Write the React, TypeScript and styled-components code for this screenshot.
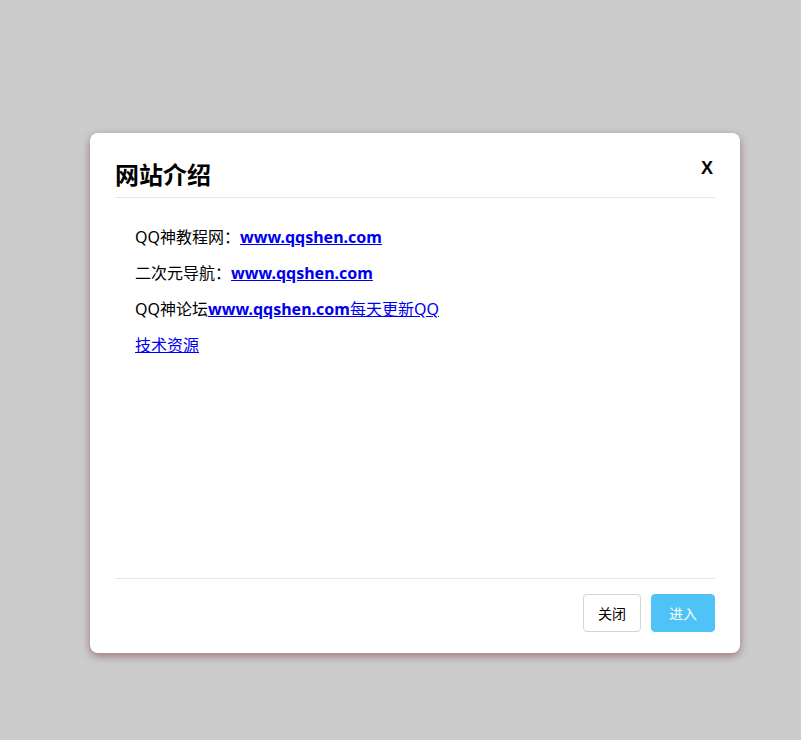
import styled, { createGlobalStyle } from "styled-components";

const GlobalStyle = createGlobalStyle`
  html, body {
    margin: 0;
    padding: 0;
    background: #cccccc;
    font-family: "Noto Sans", "Noto Sans CJK SC", sans-serif;
  }
`;

const Page = styled.div`
  min-height: 740px;
  padding: 133px 0 0 90px;
  box-sizing: border-box;
`;

const Dialog = styled.div`
  width: 650px;
  height: 520px;
  background: #fff;
  border-radius: 8px;
  box-shadow: 0 3px 9px rgba(120, 50, 50, 0.55);
  display: flex;
  flex-direction: column;
  padding: 0 25px;
  box-sizing: border-box;
`;

const Header = styled.div`
  display: flex;
  justify-content: space-between;
  align-items: flex-start;
  height: 65px;
  padding-top: 23px;
  box-sizing: border-box;
  border-bottom: 1px solid #e5e5e5;
`;

const Title = styled.h2`
  margin: 7px 0 0;
  font-size: 24px;
  line-height: 24px;
  font-weight: bold;
  color: #000;
`;

const Close = styled.button`
  border: 0;
  background: none;
  padding: 0;
  margin: 3px 2px 0 0;
  font-family: "Liberation Sans", sans-serif;
  font-size: 18px;
  line-height: 18px;
  font-weight: bold;
  color: #000;
  cursor: pointer;
`;

const Body = styled.div`
  flex: 1;
  padding: 21px 20px 0;
`;

const Line = styled.p`
  margin: 0;
  font-size: 16px;
  line-height: 36px;
  color: #000;
`;

const Link = styled.a<{ $bold?: boolean }>`
  color: #0000ee;
  text-decoration: underline;
  font-weight: ${(p) => (p.$bold ? "bold" : "normal")};
`;

const Footer = styled.div`
  display: flex;
  justify-content: flex-end;
  gap: 10px;
  padding: 15px 0 21px;
  border-top: 1px solid #e5e5e5;
`;

const Button = styled.button<{ $primary?: boolean }>`
  height: 38px;
  padding: 0 ${(p) => (p.$primary ? "17px" : "14px")};
  border-radius: 4px;
  font-family: "Noto Sans CJK SC", sans-serif;
  font-size: 14px;
  border: 1px solid ${(p) => (p.$primary ? "#4fc3f7" : "#d5d5d5")};
  background: ${(p) => (p.$primary ? "#4fc3f7" : "#fff")};
  color: ${(p) => (p.$primary ? "#fff" : "#000")};
  cursor: pointer;
`;

const App = () => {
  return (
    <Page>
      <GlobalStyle />
      <Dialog>
        <Header>
          <Title>网站介绍</Title>
          <Close>X</Close>
        </Header>
        <Body>
          <Line>
            QQ神教程网：<Link $bold href="#">www.qqshen.com</Link>
          </Line>
          <Line>
            二次元导航：<Link $bold href="#">www.qqshen.com</Link>
          </Line>
          <Line>
            QQ神论坛
            <Link href="#">
              <strong>www.qqshen.com</strong>每天更新QQ
            </Link>
          </Line>
          <Line>
            <Link href="#">技术资源</Link>
          </Line>
        </Body>
        <Footer>
          <Button>关闭</Button>
          <Button $primary>进入</Button>
        </Footer>
      </Dialog>
    </Page>
  );
};

export default App;
